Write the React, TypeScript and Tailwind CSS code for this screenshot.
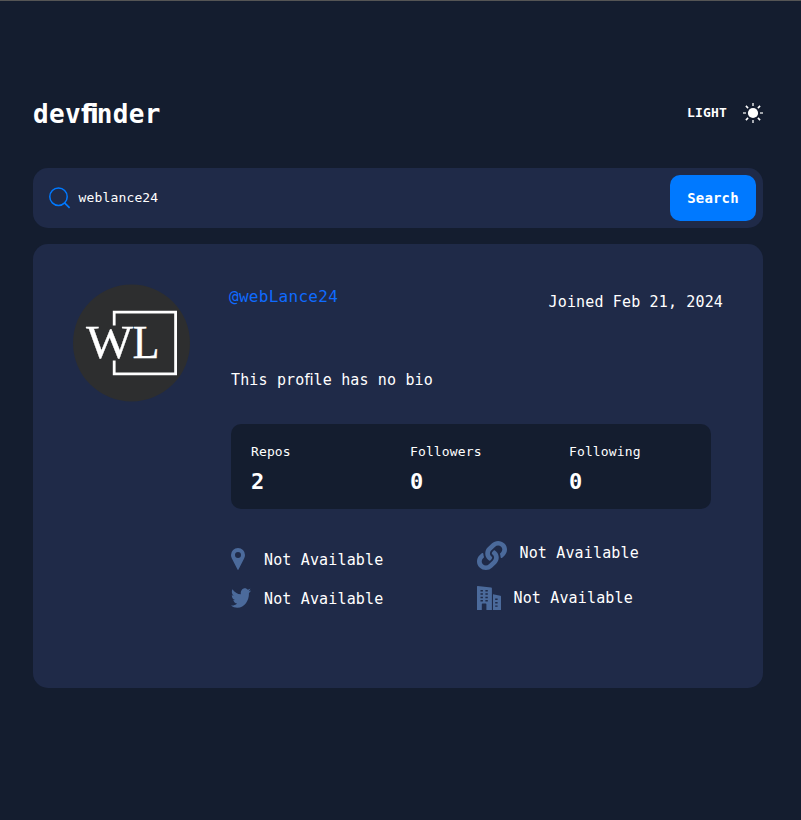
import React from "react";
import { FaLink, FaTwitter } from "react-icons/fa";

const mono = "font-['DejaVu_Sans_Mono','Liberation_Mono',monospace]";

// Tight "fi" pair that occupies one monospace cell
function Fi({ bold = false }: { bold?: boolean }) {
  return (
    <span className={bold ? "font-['DejaVu_Sans',sans-serif] tracking-[-0.083em]" : "font-['DejaVu_Sans',sans-serif] tracking-[-0.01em]"}>
      fi
    </span>
  );
}

function SunIcon() {
  return (
    <svg width="20" height="20" viewBox="0 0 20 20" className="block">
      <circle cx="10" cy="10" r="5.1" fill="#fff" />
      <g stroke="#fff" strokeWidth="1.6">
        <path d="M10 0v3M10 17v3M0 10h3M17 10h3" opacity=".8" />
        <path d="M2.9 2.9l2.200 2.200M14.900 14.900l2.200 2.200M2.900 17.100l2.200-2.200M14.900 5.100l2.200-2.200" />
      </g>
    </svg>
  );
}

function SearchIcon() {
  return (
    <svg width="22" height="22" viewBox="0 0 22 22" fill="none" stroke="#0079ff" strokeWidth="1.5" className="block">
      <circle cx="9.500" cy="9.700" r="8.700" />
      <path d="M15.300 15.600l5.300 5.200" strokeWidth="1.700" />
    </svg>
  );
}

function PinIcon() {
  return (
    <svg width="14" height="22" viewBox="0 0 14 22" className="block">
      <path
        fill="#4b6a9b"
        fillRule="evenodd"
        d="M7 0a7 7 0 0 0-7 7c0 1.300.300 2.500.900 3.600L6.500 21.600c.200.500.800.500 1 0l5.600-11C13.700 9.500 14 8.300 14 7a7 7 0 0 0-7-7zm0 3.900a3 3 0 1 1 0 6 3 3 0 0 1 0-6z"
      />
    </svg>
  );
}

function BuildingIcon() {
  return (
    <svg width="24" height="24" viewBox="0 0 24 24" className="block">
      <path fill="#4b6a9b" d="M.6.1 14.200 1.600q.7.1.7.8V24H9.400v-5.800q0-.7-.7-.7H5.500q-.7 0-.7.7V24H0V.7Q0 0 .6.1z" />
      <path fill="#4b6a9b" d="M16 8.300l7.400 1.400q.6.1.6.8V24h-8z" />
      <g fill="#1f2a48">
        <path d="M3.500 4h2.400v1.500H3.500zM8.400 4h2.400v1.500H8.400zM3.500 7.300h2.400v1.500H3.500zM8.400 7.300h2.400v1.500H8.400zM3.500 10.700h2.400v1.500H3.500zM8.400 10.700h2.400v1.500H8.400zM3.500 14h2.400v1.500H3.500zM8.400 14h2.400v1.500H8.400z" />
        <path d="M18.200 12.600h2.400v1.400h-2.400zM18.200 16h2.400v1.400h-2.400zM18.200 19.400h2.400v1.400h-2.400z" />
      </g>
    </svg>
  );
}

function Avatar() {
  return (
    <svg width="117" height="118" viewBox="0 0 117 118" className="block shrink-0">
      <ellipse cx="58.500" cy="59" rx="58.500" ry="58.500" fill="#2d2e2f" />
      <path d="M41.200 41.500V28.200h61.400v61.700H41.200V76.500" fill="none" stroke="#fff" strokeWidth="2.800" />
      <g fill="#fff" stroke="#fff" strokeWidth=".3" fontSize="47" className="font-['Liberation_Serif',serif]">
        <text x="13" y="74" textLength="47" lengthAdjust="spacingAndGlyphs">W</text>
        <text x="59.500" y="74" textLength="27" lengthAdjust="spacingAndGlyphs">L</text>
      </g>
    </svg>
  );
}

function Stat({ label, value }: { label: string; value: number }) {
  return (
    <div className="w-[159px] shrink-0">
      <div className="text-[13px] leading-5 tracking-[0.01em]">{label}</div>
      <div className="mt-1 text-[22px] font-bold leading-8">{value}</div>
    </div>
  );
}

export default function App() {
  return (
    <div className={`h-[820px] w-[801px] border-t border-[#555555] bg-[#141d2f] px-[33px] text-white ${mono}`}>
      <div className="w-[730px]">
        <header className="flex h-[167px] items-start justify-between">
          <h1 className="mt-[93px] text-[26px] font-bold leading-10 tracking-[0.012em]">
            dev
            <Fi bold />
            nder
          </h1>
          <div className="mt-[102px] flex items-center gap-4">
            <span className="text-[13px] font-bold leading-5 tracking-[0.012em]">LIGHT</span>
            <SunIcon />
          </div>
        </header>

        <div className="flex h-[60px] items-center rounded-[15px] bg-[#1f2a48] pl-[15.500px] pr-[7px]">
          <SearchIcon />
          <span className="ml-2 grow text-[13px] leading-5 tracking-[0.012em]">weblance24</span>
          <button className="h-[46px] w-[86px] rounded-[10px] bg-[#0079ff] text-[14px] font-bold tracking-[0.012em]">
            Search
          </button>
        </div>

        <main className="mt-4 flex h-[444px] rounded-[15px] bg-[#1f2a48] pl-10 pt-10">
          <Avatar />
          <div className="ml-[41px] w-[492px]">
            <div className="flex h-[84px] justify-between">
              <span className="-ml-[2px] mt-px text-[16px] leading-6 tracking-[0.018em] text-[#0f6bff]">@webLance24</span>
              <span className="mt-[6px] text-[15px] leading-6 tracking-[0.01em]">Joined Feb 21, 2024</span>
            </div>
            <p className="text-[15px] leading-6 tracking-[0.01em]">
              This pro
              <Fi />
              le has no bio
            </p>
            <div className="mt-8 flex h-[85px] w-[480px] rounded-[10px] bg-[#141d2f] pl-5 pt-[18px]">
              <Stat label="Repos" value={2} />
              <Stat label="Followers" value={0} />
              <Stat label="Following" value={0} />
            </div>
            <div className="mt-8 flex text-[15px] leading-6 tracking-[0.01em]">
              <div className="w-[246px] pt-[7px]">
                <div className="flex h-[24px] items-center">
                  <span className="-mt-[2px] w-[33px]"><PinIcon /></span>
                  Not Available
                </div>
                <div className="mt-[15px] flex h-[24px] items-center">
                  <span className="-mt-[2px] w-[33px]">
                    <FaTwitter className="block h-[24px] w-[20px]" preserveAspectRatio="none" color="#4b6a9b" />
                  </span>
                  Not Available
                </div>
              </div>
              <div>
                <div className="flex h-[30px] items-start">
                  <span className="w-[42.500px]"><FaLink className="block h-[29px] w-[30px]" preserveAspectRatio="none" color="#4b6a9b" /></span>
                  Not Available
                </div>
                <div className="mt-[15px] flex h-[24px] items-center">
                  <span className="w-[36.500px]"><BuildingIcon /></span>
                  Not Available
                </div>
              </div>
            </div>
          </div>
        </main>
      </div>
    </div>
  );
}
